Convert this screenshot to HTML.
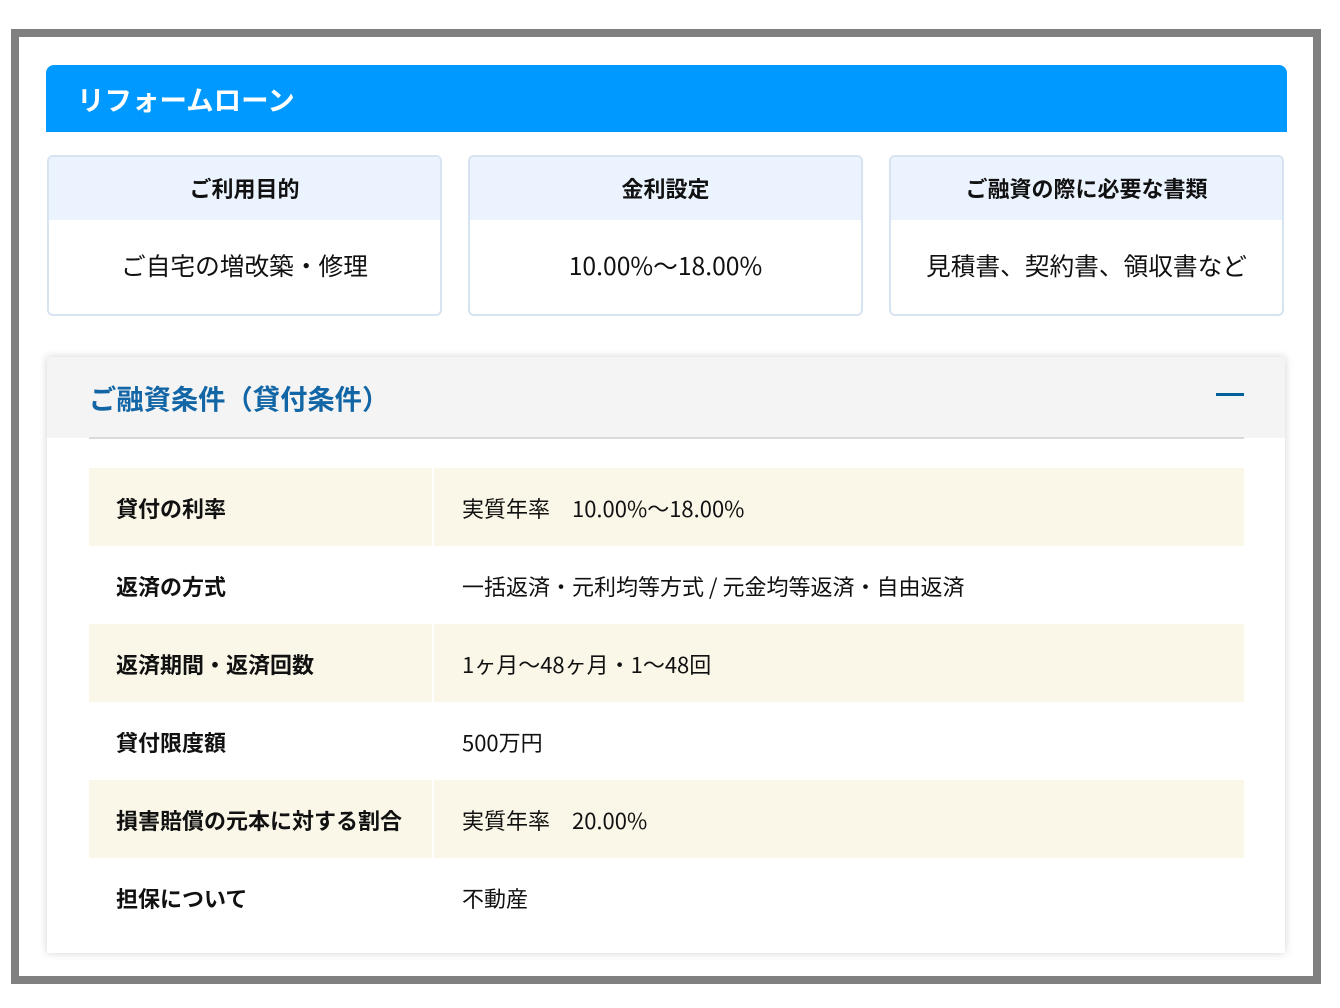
<!DOCTYPE html>
<html><head><meta charset="utf-8"><style>
*{margin:0;padding:0;box-sizing:border-box}
body{width:1340px;height:1008px;background:#fff;font-family:"Noto Sans CJK JP","Liberation Sans",sans-serif;position:relative;overflow:hidden;color:#111}
.frame{position:absolute;left:11px;top:29px;width:1310px;height:955px;border:8px solid #808080}
.title{position:absolute;left:46px;top:65px;width:1241px;height:67px;background:#0099ff;border-radius:8px 8px 0 0;color:#fff;font-size:27.5px;font-weight:bold;padding-left:31px;line-height:66px}
.card{position:absolute;top:155px;width:395px;height:161px;border:2px solid #d7e3f1;border-radius:6px;overflow:hidden;background:#fff}
.card .h{height:63px;background:#ebf3ff;text-align:center;font-weight:bold;font-size:22px;line-height:62px}
.card .v{text-align:center;font-size:24.7px;line-height:91px}
.sec{position:absolute;left:47px;top:357px;width:1238px;height:596px;background:#fff;box-shadow:0 0 8px rgba(0,0,0,.18)}
.sh{height:81px;background:#f4f4f4;position:relative}
.sh span{position:absolute;left:42px;top:21px;font-size:27.3px;line-height:38px;font-weight:bold;color:#1366a6}
.line{position:absolute;left:42px;top:80px;width:1155px;height:2px;background:#d9d9d9}
.minus{position:absolute;left:1169px;top:36px;width:28px;height:3px;background:#00609c}
table{position:absolute;left:42px;top:111px;width:1155px;border-collapse:collapse}
td{height:78px;font-size:22px;padding:2px 0 0;line-height:30px}
td.l{width:344px;padding-left:27px;font-weight:bold}
td.r{padding-left:28px;border-left:2px solid #fff}
tr.y td{background:#faf7e8}
</style></head><body>
<div class="frame"></div>
<div class="title">リフォームローン</div>
<div class="card" style="left:47px"><div class="h">ご利用目的</div><div class="v">ご自宅の増改築・修理</div></div>
<div class="card" style="left:468px"><div class="h">金利設定</div><div class="v">10.00%〜18.00%</div></div>
<div class="card" style="left:889px"><div class="h">ご融資の際に必要な書類</div><div class="v">見積書、契約書、領収書など</div></div>
<div class="sec">
<div class="sh"><span>ご融資条件（貸付条件）</span><div class="minus"></div></div>
<div class="line"></div>
<table>
<tr class="y"><td class="l">貸付の利率</td><td class="r">実質年率　10.00%〜18.00%</td></tr>
<tr><td class="l">返済の方式</td><td class="r">一括返済・元利均等方式 / 元金均等返済・自由返済</td></tr>
<tr class="y"><td class="l">返済期間・返済回数</td><td class="r">1ヶ月〜48ヶ月・1〜48回</td></tr>
<tr><td class="l">貸付限度額</td><td class="r">500万円</td></tr>
<tr class="y"><td class="l">損害賠償の元本に対する割合</td><td class="r">実質年率　20.00%</td></tr>
<tr><td class="l">担保について</td><td class="r">不動産</td></tr>
</table>
</div>
</body></html>
